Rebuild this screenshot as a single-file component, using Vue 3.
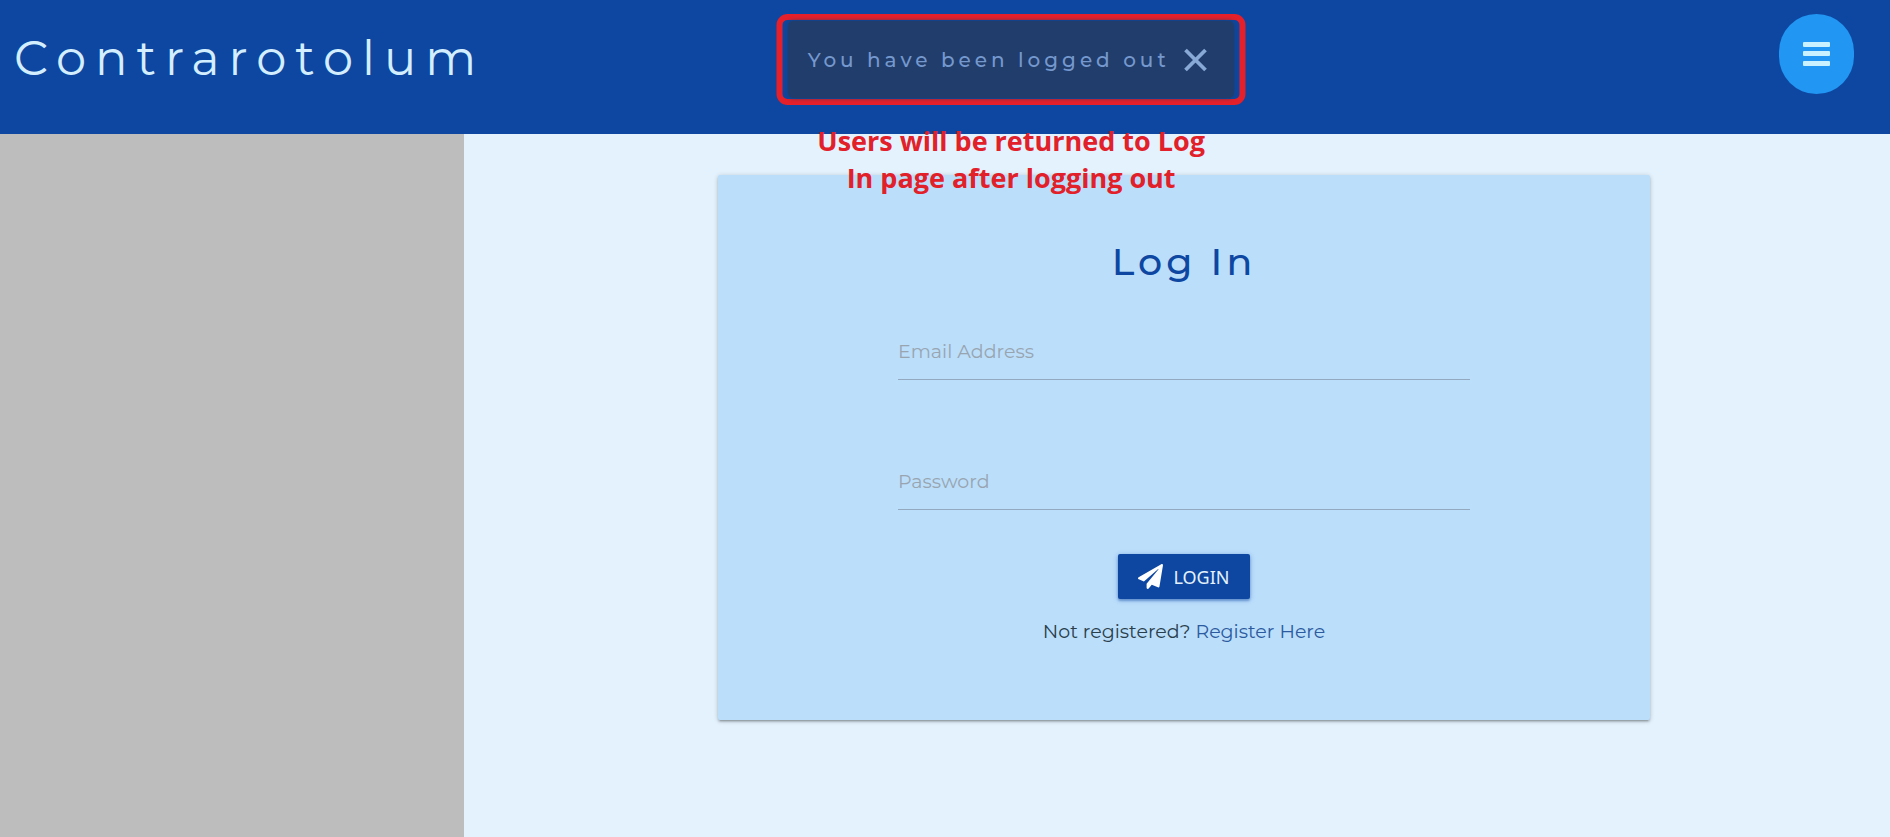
<script setup>
import { ref } from 'vue'

const email = ref('')
const password = ref('')
const showNotice = ref(true)
</script>

<template>
  <div class="page">
    <header class="topbar">
      <a class="brand" href="#">Contrarotolum</a>
      <button class="menu" type="button" aria-label="Open menu">
        <svg width="32" height="32" viewBox="0 0 32 32" aria-hidden="true">
          <g fill="#c9f1ff">
            <rect x="2" y="4" width="27" height="5" rx="1" />
            <rect x="2" y="13" width="27" height="5" rx="1" />
            <rect x="2" y="23" width="27" height="5" rx="1" />
          </g>
        </svg>
      </button>
    </header>

    <div class="callout">
      <div class="frame">
        <div v-if="showNotice" class="notice" role="status">
          <span>You have been logged out</span>
          <button class="close" type="button" aria-label="Dismiss" @click="showNotice = false">
            <svg width="24" height="24" viewBox="0 0 24 24" aria-hidden="true">
              <path d="M2 2 22 22M22 2 2 22" fill="none" stroke="#88a9d6" stroke-width="3.8" />
            </svg>
          </button>
        </div>
      </div>
      <p class="caption">Users will be returned to Log In page after logging out</p>
    </div>

    <div class="body">
      <aside class="side"></aside>
      <main class="main">
        <section class="card">
          <h1 class="title">Log In</h1>
          <form class="form" @submit.prevent>
            <div class="field">
              <input id="email" v-model="email" type="email" placeholder="Email Address" aria-label="Email Address" />
            </div>
            <div class="field">
              <input id="password" v-model="password" type="password" placeholder="Password" aria-label="Password" />
            </div>
            <button class="submit" type="submit">
              <svg width="25" height="25" viewBox="0 0 512 512" aria-hidden="true">
                <path
                  fill="#ffffff"
                  d="M476 3.200 12.500 270.600c-18.100 10.400-15.800 35.600 2.200 43.200L121 358.400l287.300-253.200c5.500-4.900 13.300 2.600 8.600 8.300L176 407v80.500c0 23.600 28.500 32.900 42.500 15.800L282 426l124.600 52.200c14.200 6 30.400-2.900 33-18.200l72-432C515 7.800 493.300-6.800 476 3.200z"
                />
              </svg>
              <span>LOGIN</span>
            </button>
            <p class="register">Not registered? <a href="#">Register Here</a></p>
          </form>
        </section>
      </main>
    </div>
  </div>
</template>

<style>
body {
  margin: 0;
  background: #e3f2fd;
}
</style>

<style scoped>
.page {
  position: relative;
  display: flex;
  flex-direction: column;
  min-height: 100vh;
  font-family: Montserrat, Inter, "Open Sans", sans-serif;
  background: #e3f2fd;
}

.topbar {
  display: flex;
  align-items: flex-start;
  justify-content: space-between;
  box-sizing: border-box;
  height: 134px;
  padding: 14px 36px 0 14px;
  background: #0d47a1;
}

.brand {
  color: #d3eeff;
  font-size: 48px;
  font-weight: 400;
  line-height: 88px;
  letter-spacing: 9px;
  text-decoration: none;
}

.menu {
  display: flex;
  align-items: center;
  justify-content: center;
  width: 75px;
  height: 80px;
  padding: 0;
  border: 0;
  border-radius: 38px;
  background: #2196f3;
  cursor: pointer;
}

.callout {
  position: absolute;
  top: 14px;
  left: 53.5%;
  width: 469px;
  transform: translateX(-50%);
}

.frame {
  padding: 1px 6px;
  border: 6px solid #e5202a;
  border-radius: 11px;
}

.notice {
  display: flex;
  align-items: center;
  justify-content: space-between;
  box-sizing: border-box;
  height: 77px;
  padding: 0 26px 0 19px;
  border-radius: 5px;
  background: #213d6b;
  box-shadow: 0 0 4px #213d6b;
  color: #7598ce;
  font-size: 20px;
  font-weight: 500;
  letter-spacing: 4px;
  white-space: nowrap;
}

.close {
  display: flex;
  padding: 0;
  border: 0;
  background: none;
  cursor: pointer;
}

.caption {
  margin: 17px 40px 0;
  color: #e2202a;
  font-family: "Open Sans", sans-serif;
  font-size: 27px;
  font-weight: 700;
  line-height: 37px;
  text-align: center;
}

.body {
  display: flex;
  flex: 1;
}

.side {
  flex: 0 0 464px;
  background: #bdbdbd;
}

.main {
  flex: 1;
  padding: 41px 0 41px 14px;
}

.card {
  box-sizing: border-box;
  width: 66%;
  margin: 0 auto;
  padding: 59px 24px 75px;
  border-radius: 2px;
  background: #bbdefb;
  box-shadow: 0 2px 2px rgba(0, 0, 0, 0.14), 0 3px 1px -2px rgba(0, 0, 0, 0.12), 0 1px 5px rgba(0, 0, 0, 0.2);
}

.title {
  margin: 0;
  color: #0d47a1;
  font-size: 38px;
  font-weight: 500;
  line-height: 56px;
  letter-spacing: 4px;
  text-align: center;
}

.form {
  display: flex;
  flex-direction: column;
  align-items: center;
  width: 572px;
  max-width: 100%;
  margin: 33px auto 0;
}

.field {
  width: 100%;
  height: 130px;
}

.field input {
  box-sizing: border-box;
  width: 100%;
  height: 57px;
  padding: 0;
  border: 0;
  border-bottom: 1px solid #93a9bf;
  outline: 0;
  background: transparent;
  color: #263238;
  font-family: inherit;
  font-size: 19px;
}

.field input::placeholder {
  color: #98a5b0;
  opacity: 1;
}

.submit {
  display: flex;
  align-items: center;
  gap: 10px;
  height: 45px;
  margin-top: -29px;
  padding: 0 20px;
  border: 0;
  border-radius: 2px;
  background: #0d47a1;
  box-shadow: 0 2px 2px rgba(13, 71, 161, 0.3), 0 1px 5px rgba(13, 71, 161, 0.4);
  color: #e3f2fd;
  font-family: "Noto Sans", "Open Sans", sans-serif;
  font-size: 18px;
  cursor: pointer;
}

.register {
  margin: 20px 0 0;
  color: #2a3f4c;
  font-size: 19px;
  line-height: 26px;
}

.register a {
  color: #2c5a9e;
  text-decoration: none;
}
</style>
